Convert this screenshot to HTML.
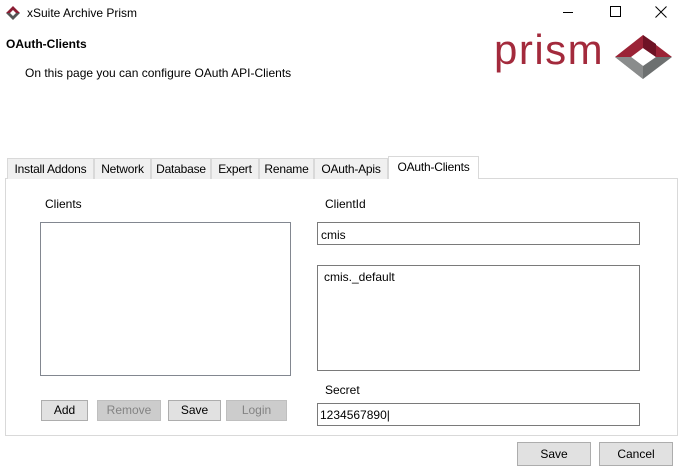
<!DOCTYPE html>
<html><head><style>
*{box-sizing:border-box;margin:0;padding:0}
body{width:682px;height:474px;background:#fff;font-family:"Liberation Sans",sans-serif;font-size:12px;color:#000;position:relative;overflow:hidden}
.a{position:absolute}
.tab{position:absolute;top:158px;height:21px;border:1px solid #d9d9d9;border-bottom:none;background:#f0f0f0;font-size:12px;line-height:20px;text-align:center;letter-spacing:-0.2px}
.box{position:absolute;background:#fff;border:1px solid #7a7a7a}
.btn{position:absolute;height:21px;border:1px solid #adadad;background:#e1e1e1;text-align:center;line-height:19px;font-size:12px}
</style></head><body>
<svg class="a" style="left:5px;top:5px" width="16" height="16" viewBox="0 0 16 16"><polygon points="8,1 15,8 11,8 8,5 5,8 1,8" fill="#8b1d33"/><polygon points="1,8 5,8 8,11 11,8 15,8 8,15" fill="#555"/></svg>
<div class="a" style="left:27px;top:6px;font-size:12px">xSuite Archive Prism</div>
<div class="a" style="left:563px;top:12px;width:10px;height:1px;background:#000"></div>
<div class="a" style="left:610px;top:6px;width:11px;height:11px;border:1px solid #000"></div>
<svg class="a" style="left:655px;top:6px" width="12" height="12"><path d="M0.5 0.5L11.5 11.5M11.5 0.5L0.5 11.5" stroke="#000"/></svg>
<div class="a" style="left:6px;top:37px;font-weight:bold;font-size:12px">OAuth-Clients</div>
<div class="a" style="left:25px;top:66px">On this page you can configure OAuth API-Clients</div>
<div class="a" style="left:494px;top:28px;font-size:42px;color:#a32a3c;letter-spacing:1.5px;line-height:44px">prism</div>
<svg class="a" style="left:614px;top:34px" width="60" height="46" viewBox="0 0 60 46"><polygon points="29,1 58,23 42,23 29,14 17,23 1,23" fill="#9b2336"/><polygon points="29,1 42,10 42,23 29,14" fill="#6e1325"/><polygon points="1,23 17,23 29,32 42,23 58,23 29,45" fill="#6d7070"/><polygon points="1,23 17,23 29,32 29,45" fill="#8a8c8c"/></svg>
<div class="a" style="left:5px;top:178px;width:673px;height:258px;border:1px solid #d9d9d9;background:#fff"></div>
<div class="tab" style="left:7px;width:87px">Install Addons</div>
<div class="tab" style="left:94px;width:57px">Network</div>
<div class="tab" style="left:151px;width:60px">Database</div>
<div class="tab" style="left:211px;width:48px">Expert</div>
<div class="tab" style="left:259px;width:55px">Rename</div>
<div class="tab" style="left:314px;width:74px">OAuth-Apis</div>
<div class="tab" style="left:388px;top:156px;height:23px;width:91px;background:#fff;line-height:20px">OAuth-Clients</div>
<div class="a" style="left:45px;top:197px">Clients</div>
<div class="a" style="left:325px;top:197px">ClientId</div>
<div class="box" style="left:40px;top:222px;width:251px;height:154px;border-color:#828790"></div>
<div class="box" style="left:317px;top:222px;width:323px;height:23px;padding:5px 3px">cmis</div>
<div class="box" style="left:317px;top:265px;width:323px;height:106px;padding:4px 6px">cmis._default</div>
<div class="a" style="left:325px;top:383px">Secret</div>
<div class="box" style="left:317px;top:403px;width:323px;height:23px;padding:4px 2px">1234567890|</div>
<div class="btn" style="left:41px;top:400px;width:47px">Add</div>
<div class="btn" style="left:97px;top:400px;width:64px;color:#838383;background:#ccc;border-color:#bfbfbf">Remove</div>
<div class="btn" style="left:168px;top:400px;width:53px">Save</div>
<div class="btn" style="left:226px;top:400px;width:61px;color:#838383;background:#ccc;border-color:#bfbfbf">Login</div>
<div class="btn" style="left:517px;top:442px;width:74px;height:24px;line-height:22px">Save</div>
<div class="btn" style="left:599px;top:442px;width:74px;height:24px;line-height:22px">Cancel</div>
</body></html>
